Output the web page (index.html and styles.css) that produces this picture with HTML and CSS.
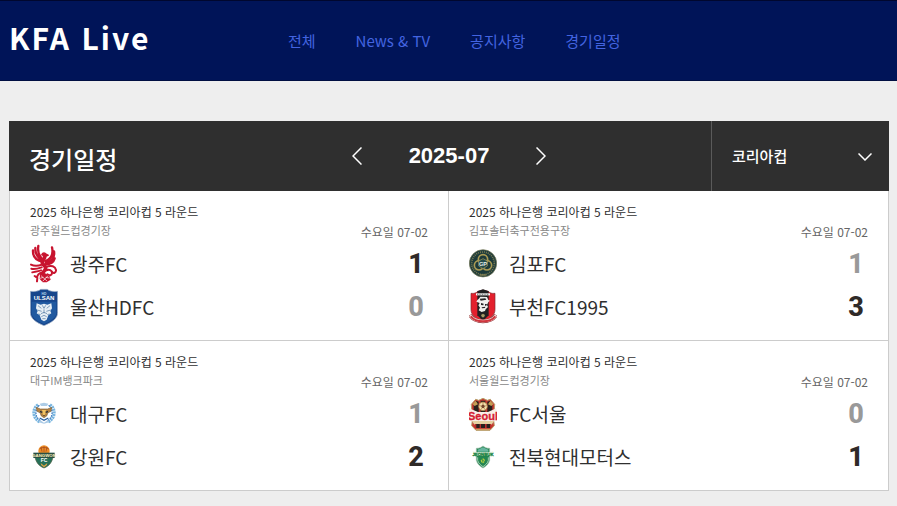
FILE: index.html
```html
<!DOCTYPE html>
<html lang="ko">
<head>
<meta charset="utf-8">
<meta name="viewport" content="width=device-width, initial-scale=1">
<title>KFA Live</title>
<link rel="stylesheet" href="styles.css">
</head>
<body>
<header class="site-header">
  <a class="brand" href="#">KFA Live</a>
  <nav class="menu">
    <a href="#">전체</a>
    <a href="#">News &amp; TV</a>
    <a href="#">공지사항</a>
    <a href="#">경기일정</a>
  </nav>
</header>
<main class="schedule">
  <div class="schedule-head">
    <h1 class="schedule-title">경기일정</h1>
    <div class="month">
      <button class="arrow" type="button" aria-label="이전 달"><svg width="10" height="18" viewBox="0 0 10 18"><path d="M9.5 .5 1 9l8.500 8.500"/></svg></button>
      <span class="month-label">2025-07</span>
      <button class="arrow" type="button" aria-label="다음 달"><svg width="10" height="18" viewBox="0 0 10 18"><path d="M.5 .5 9 9 .5 17.500"/></svg></button>
    </div>
    <div class="cup">
      <select class="cup-select" aria-label="대회"><option>코리아컵</option></select>
      <svg class="cup-chevron" width="14" height="8" viewBox="0 0 14 8"><path d="M.5 .5 7 7 13.500 .5"/></svg>
    </div>
  </div>
  <ul class="matches">
    <li class="match">
      <div class="match-info">
        <div><h2 class="round">2025 하나은행 코리아컵 5 라운드</h2><p class="venue">광주월드컵경기장</p></div>
        <time class="date">수요일 07-02</time>
      </div>
      <div class="team">
        <svg class="emblem" viewBox="0 0 84 120">
          <g fill="none" stroke="#c8142f" stroke-linecap="round" stroke-linejoin="round">
            <path stroke-width="11" d="M42 33c9 10-8 14-5 24 2 8 14 9 9 19-4 8-11 11-11 19"/>
            <path stroke-width="7" d="M39 53C18 50 8 38 9 19M38 50C21 40 15 29 16 12M39 47C27 36 22 23 25 6M46 51c17-6 25-19 20-41M47 57c19-5 28-19 25-35M47 61c16-1 24-7 27-18"/>
            <path stroke-width="6" d="M36 62C22 67 11 66 3 62M35 70C20 75 12 76 4 74M33 79C20 83 12 83 7 85M46 70c19-9 30-2 32 8 1 8-8 12-12 5M48 79c10-5 18 0 18 8 0 7-8 9-14 4M36 86c-9 0-15 8-15 16M22 102l-8-6m8 6-1 10"/>
            <path stroke-width="5" d="M36 32c3-7 9-6 12-1l6 3-8 3"/>
          </g>
          <path fill="#c8142f" d="m30 91 14-4 14 8 4 12-12 8H38l-9-10z"/>
          <path stroke="#fff" stroke-width="2" d="m33 95 18 16m3-16-16 17m-8-9 10-3m19 2-12-2" fill="none"/>
        </svg>
        <span class="name">광주FC</span><strong class="score win">1</strong>
      </div>
      <div class="team">
        <svg class="emblem" viewBox="0 0 84 120">
          <path fill="#17468c" stroke="#b2bfd0" stroke-width="2" d="M1 13c17 1 25-1 31-6h20c6 5 14 7 31 6v64c0 18-17 29-41 39C18 106 1 95 1 77z"/>
          <path fill="#2059a0" d="M5 44h74v33c0 14-14 23-37 34C19 101 5 91 5 77z"/>
          <text class="crest-text" x="42" y="23" font-size="10" fill="#b8d4ec">HD</text>
          <text class="crest-text" x="42" y="38" font-size="18" fill="#fff">ULSAN</text>
          <path fill="#e7eff5" d="m20 49 12 4 10-3 10 3 12-4 2 15-5 8 3 7-9 6-5 13-8 5-8-5-5-13-9-6 3-7-5-8z"/>
          <path fill="none" stroke="#4a749f" stroke-width="2" d="m24 56 10 8m26-8-10 8M22 69l13 4m27-4-13 4M37 55l5 9 5-9M42 67v12m-9 1 9-4 9 4m-17 9 8-4 8 4m-13 6h10M25 81l7 2m27-2-7 2"/>
        </svg>
        <span class="name">울산HDFC</span><strong class="score">0</strong>
      </div>
    </li>
    <li class="match">
      <div class="match-info">
        <div><h2 class="round">2025 하나은행 코리아컵 5 라운드</h2><p class="venue">김포솔터축구전용구장</p></div>
        <time class="date">수요일 07-02</time>
      </div>
      <div class="team">
        <svg class="emblem" viewBox="0 0 84 120">
          <circle cx="42" cy="58" r="41" fill="#1d3b3b" stroke="#797854" stroke-width="2"/>
          <circle cx="42" cy="58" r="34" fill="none" stroke="#79794f" stroke-width="5" stroke-dasharray="3 3"/>
          <circle cx="42" cy="58" r="28" fill="#1d3a3a"/>
          <g fill="none" stroke="#aa9b54" stroke-width="5"><circle cx="42" cy="46" r="14"/><circle cx="30" cy="64" r="14"/><circle cx="54" cy="64" r="14"/></g>
          <path fill="#234b4c" stroke="#a89c5b" stroke-width="2" d="m42 44 13 7v15l-13 8-13-8V51z"/>
          <text class="crest-text" x="42" y="65" font-size="17" fill="#e5eee8">GP</text>
          <path stroke="#9e925a" stroke-width="3" d="M32 93h20"/>
        </svg>
        <span class="name">김포FC</span><strong class="score">1</strong>
      </div>
      <div class="team">
        <svg class="emblem" viewBox="0 0 84 120">
          <path fill="#e3202d" stroke="#7e2930" stroke-width="2" d="M6 19c10 1 16-1 20-6l16-4 16 4c4 5 10 7 20 6v48c0 17-12 27-36 38C18 94 6 84 6 67z"/>
          <path fill="#202022" d="M25 13 42 7l17 6v72l-17 17-17-17z"/>
          <path fill="#fff" d="M21 19h42v6H21z"/>
          <path stroke="#333" stroke-width="2" stroke-dasharray="3 2" d="M24 22h36"/>
          <path fill="#f0f0ee" d="m28 37 6-8 20 1 4 9 5 2-5 4-4 9 3 6-7 7-2 5-10 3-9-5 4-8-5-7 4-7-10-4 3-5z"/>
          <path fill="#252326" d="m32 35 17-1 3 4-17 3zM36 48l8 2-1 5-7-1zm12 3h6l-2 5h-4zM38 61l11-2-1 4-9 1z"/>
          <path fill="none" stroke="#932b30" stroke-width="12" d="M3 84c15 25 63 25 78 0"/>
          <path fill="none" stroke="#f1ded9" stroke-width="8" d="M3 85c15 23 63 23 78 0"/>
          <path fill="none" stroke="#d1363e" stroke-width="6" d="M5 88c16 20 58 20 74 0"/>
          <path fill="#a69b66" d="m42 80 6 4-3 7h-6l-3-7z"/>
        </svg>
        <span class="name">부천FC1995</span><strong class="score win">3</strong>
      </div>
    </li>
    <li class="match">
      <div class="match-info">
        <div><h2 class="round">2025 하나은행 코리아컵 5 라운드</h2><p class="venue">대구IM뱅크파크</p></div>
        <time class="date">수요일 07-02</time>
      </div>
      <div class="team">
        <svg class="emblem" viewBox="0 0 84 120">
          <path fill="none" stroke="#78b5df" stroke-width="9" stroke-dasharray="6 2" d="M24 32C5 44 8 75 30 84m30-52c19 12 16 43-6 52"/>
          <path fill="none" stroke="#3c7cbf" stroke-width="4" stroke-dasharray="5 3" d="M28 34C13 47 14 71 33 81m23-47c15 13 14 37-5 47"/>
          <path fill="#accce7" d="m29 29 13-3 13 3-4 7H33zM29 77l13 9 13-9 3 8-16 4-16-4z"/>
          <path fill="#b88342" stroke="#7e653e" stroke-width="2" d="m19 40 12 5h22l12-5-2 12-9 4-4 10-8 5-8-5-4-10-9-4z"/>
          <path fill="#f1c363" d="M36 48h12l-2 12-4 5-4-5z"/>
          <path fill="#2f3338" d="m30 50 8 3-2 4-6-2zm24 0-8 3 2 4 6-2zM39 63h6l-3 4z"/>
          <path stroke="#265c9d" stroke-width="4" d="m29 72 13 7 13-7" fill="none"/>
        </svg>
        <span class="name">대구FC</span><strong class="score">1</strong>
      </div>
      <div class="team">
        <svg class="emblem" viewBox="0 0 84 120">
          <path fill="#267058" stroke="#555f45" stroke-width="2" d="M14 50h56c-1 24-11 36-28 43-17-7-27-19-28-43z"/>
          <circle cx="42" cy="42" r="17" fill="#ed8c24"/>
          <path fill="none" stroke="#963f20" stroke-width="2" d="M29 36c9-7 20-6 28 1M42 28v17m-9-15 3 14m15-14-3 14"/>
          <path fill="#294f43" d="M10 47h64v16H10z"/>
          <text class="crest-text" x="42" y="60" font-size="13" fill="#fff2bd">GANGWON</text>
          <text class="crest-text" x="42" y="76" font-size="15" fill="#fff">FC</text>
          <path fill="#e5a442" d="m32 78 10 8 10-8-2 7-8 6-8-6z"/>
        </svg>
        <span class="name">강원FC</span><strong class="score win">2</strong>
      </div>
    </li>
    <li class="match">
      <div class="match-info">
        <div><h2 class="round">2025 하나은행 코리아컵 5 라운드</h2><p class="venue">서울월드컵경기장</p></div>
        <time class="date">수요일 07-02</time>
      </div>
      <div class="team">
        <svg class="emblem" viewBox="0 0 84 120">
          <path fill="#c63a33" stroke="#b7a16a" stroke-width="3" d="m20 16 9 3 13-6 13 6 9-3 13 15-3 48 2 16-13 14H21L8 95l2-16L7 31z"/>
          <path fill="#28211e" d="m20 20 9 3v65H14V32zm44 0-9 3v65h15V32zM35 20h14v70H35z"/>
          <path fill="#c49e55" d="m20 20 7 11-10 5-6-5zm44 0-7 11 10 5 6-5z"/>
          <circle cx="42" cy="37" r="13" fill="#f3dfab" stroke="#9b7037" stroke-width="2"/>
          <path fill="#76482c" d="m42 31 6 5-3 6h-6l-3-6z"/>
          <path stroke="#a3733c" stroke-width="2" fill="none" d="m42 25 0 6m-11 4 5 1m17-1-5 1m-12 11 3-5m9 5-3-5"/>
          <path fill="#f8eee7" d="m0 43 27 11h30l25-11 2 38H0z"/>
          <text class="crest-text" x="42" y="78" font-size="33" fill="#d51e35" stroke="#d51e35">Seoul</text>
          <path fill="#e5d1a1" d="M9 81h66l-7 11H16z"/>
          <path fill="#b72d2a" d="M17 90h50v12H17z"/>
          <path fill="#28211e" d="M22 90h10v12H22zm31 0h10v12H53zM36 90h12v12H36z"/>
          <path stroke="#d1b06a" stroke-width="3" d="M21 106h42"/>
        </svg>
        <span class="name">FC서울</span><strong class="score">0</strong>
      </div>
      <div class="team">
        <svg class="emblem" viewBox="0 0 84 120">
          <path fill="#238651" stroke="#a2bdab" stroke-width="2" d="M22 34c10 0 14-3 20-7 6 4 10 7 20 7v36c-3 11-10 18-20 23-10-5-17-12-20-23z"/>
          <path fill="#69b6a0" d="m26 38 16-7 16 7v6H26z"/>
          <path fill="#eef5df" d="m11 43 14 3h34l14-3-3 14H14z"/>
          <text class="crest-text" x="42" y="56" font-size="13" fill="#168142" stroke="#168142">JEONBUK</text>
          <path stroke="#dfefdf" stroke-width="2" fill="none" d="M26 61v9c2 8 8 14 16 19 8-5 14-11 16-19v-9"/>
          <path fill="#b9d341" d="m42 63 6 6-2 7-4 3-5-3-2-6z"/>
          <path stroke="#26834c" stroke-width="2" fill="none" d="m36 67 12 7m-7-11v14"/>
        </svg>
        <span class="name">전북현대모터스</span><strong class="score win">1</strong>
      </div>
    </li>
  </ul>
</main>
</body>
</html>
```
FILE: styles.css
```css
* { box-sizing: border-box; }

body {
  margin: 0;
  background: #eee;
  color: #2f2f2f;
  font-family: "Noto Sans CJK KR", "Noto Sans", sans-serif;
}

h1, h2, p, ul { margin: 0; padding: 0; }
a { color: inherit; text-decoration: none; }

.site-header {
  display: grid;
  grid-template-columns: 279px 1fr;
  align-items: center;
  height: 81px;
  padding: 0 8px 0 9px;
  background: #001458;
  border-top: 1px solid #00072e;
  border-bottom: 1px solid #000e42;
}

.brand {
  color: #fff;
  font-size: 30px;
  font-weight: 700;
  line-height: 40px;
  letter-spacing: 2px;
  padding-bottom: 8px;
}

.menu {
  display: flex;
  gap: 40px;
  color: #4364e0;
  font-size: 15px;
  line-height: 24px;
}

.schedule { padding: 40px 8px 0 9px; }

.schedule-head {
  display: grid;
  grid-template-columns: 1fr auto 1fr;
  align-items: center;
  height: 70px;
  padding-left: 20px;
  background: #2f2f2f;
  color: #fff;
}

.schedule-title {
  padding-top: 6px;
  font-size: 24px;
  font-weight: 500;
  line-height: 36px;
}

.month {
  display: flex;
  align-items: center;
  gap: 47px;
  margin-right: 20px;
}

.month-label {
  font-family: "Liberation Sans", Arial, sans-serif;
  font-size: 22px;
  font-weight: 700;
  line-height: 24px;
}

.arrow {
  display: flex;
  padding: 0;
  border: 0;
  background: none;
  cursor: pointer;
}

.arrow svg, .cup-chevron {
  fill: none;
  stroke: #fff;
  stroke-width: 1.5;
}

.cup {
  position: relative;
  justify-self: end;
  align-self: stretch;
  width: 178px;
  border-left: 1px solid #5a5a5a;
}

.cup-select {
  width: 100%;
  height: 100%;
  padding: 0 40px 2px 20px;
  border: 0;
  appearance: none;
  background: #2f2f2f;
  color: #fff;
  font: 500 15px "Noto Sans CJK KR", sans-serif;
}

.cup-chevron {
  position: absolute;
  top: 32px;
  right: 17px;
  pointer-events: none;
}

.matches {
  display: grid;
  grid-template-columns: 1fr 1fr;
  border: solid #ccc;
  border-width: 0 1px 0 1px;
  background: #fff;
  list-style: none;
}

.match {
  padding: 12px 20px;
  border-bottom: 1px solid #ccc;
}

.match:nth-child(odd) { border-right: 1px solid #ccc; }

.match-info {
  display: flex;
  justify-content: space-between;
  align-items: flex-end;
  margin-bottom: 3px;
}

.round {
  font-size: 12px;
  font-weight: 400;
  line-height: 18px;
}

.venue {
  color: #888;
  font-size: 11px;
  line-height: 18px;
}

.date {
  color: #666;
  font-size: 12px;
  line-height: 14px;
}

.team {
  display: flex;
  align-items: center;
  height: 43px;
}

.emblem {
  flex: none;
  width: 28px;
  height: 40px;
  margin-right: 12px;
}

.crest-text {
  font-family: "Liberation Sans", Arial, sans-serif;
  font-weight: 700;
  text-anchor: middle;
}

.name {
  flex: 1;
  font-size: 19px;
  line-height: 28px;
}

.score {
  width: 24px;
  color: #999;
  font-family: Roboto, sans-serif;
  font-size: 27px;
  font-weight: 800;
  line-height: 32px;
  text-align: center;
}

.score.win { color: #2f2a28; }
```
